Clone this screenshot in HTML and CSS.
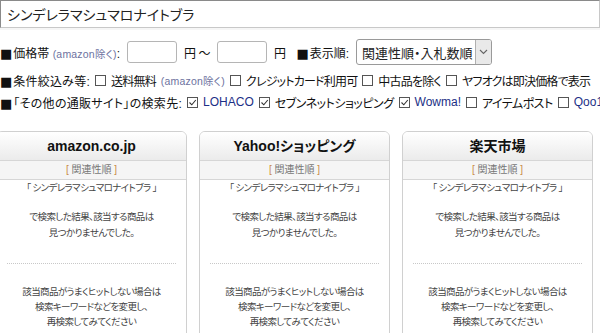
FILE: index.html
```html
<!DOCTYPE html>
<html lang="ja">
<head>
    <meta charset="UTF-8">
    <title>シンデレラマシュマロナイトブラ - 横断検索</title>
    <link rel="stylesheet" href="styles.css">
</head>
<body>

    <div class="searchbar">
        <input type="text" class="keyword" value="シンデレラマシュマロナイトブラ">
    </div>

    <div class="options">
        <div class="row">
            <span class="head"><span class="sq">■</span>価格帯 <small class="note">(amazon除く)</small>:</span>
            <input type="text" class="price">
            <span>円 ～</span>
            <input type="text" class="price">
            <span>円</span>
            <span class="head sort-label"><span class="sq">■</span>表示順:</span>
            <div class="select">
                <span class="select-text">関連性順・入札数順</span>
                <span class="select-arrow">
                    <svg width="9" height="6" viewBox="0 0 9 6"><path d="M1 1 L4.5 4.5 L8 1" fill="none" stroke="#666" stroke-width="1.1"/></svg>
                </span>
            </div>
        </div>

        <div class="row tight">
            <span class="head"><span class="sq">■</span>条件絞込み等:</span>
            <label><span class="box"></span>送料無料 <small class="note">(amazon除く)</small></label>
            <label><span class="box"></span>クレジットカード利用可</label>
            <label><span class="box"></span>中古品を除く</label>
            <label><span class="box"></span>ヤフオクは即決価格で表示</label>
        </div>

        <div class="row">
            <span class="head-sites"><span class="sq">■</span>「その他の通販サイト」の検索先:</span>
            <label><span class="box"><svg width="9" height="9" viewBox="0 0 9 9"><path d="M1.5 4.5 L3.8 6.8 L7.8 2" fill="none" stroke="#333" stroke-width="1.1"/></svg></span><span class="site">LOHACO</span></label>
            <label><span class="box"><svg width="9" height="9" viewBox="0 0 9 9"><path d="M1.5 4.5 L3.8 6.8 L7.8 2" fill="none" stroke="#333" stroke-width="1.1"/></svg></span>セブンネットショッピング</label>
            <label><span class="box"><svg width="9" height="9" viewBox="0 0 9 9"><path d="M1.5 4.5 L3.8 6.8 L7.8 2" fill="none" stroke="#333" stroke-width="1.1"/></svg></span><span class="site">Wowma!</span></label>
            <label><span class="box"></span>アイテムポスト</label>
            <label><span class="box"></span><span class="site">Qoo10</span></label>
        </div>
    </div>

    <div class="results">
        <div class="card">
            <div class="card-head">amazon.co.jp</div>
            <div class="card-sort"><span class="br">[</span> 関連性順 <span class="br">]</span></div>
            <div class="card-body">
                <p class="query">「 シンデレラマシュマロナイトブラ 」</p>
                <p class="result">で検索した結果、該当する商品は<br>見つかりませんでした。</p>
                <hr>
                <p class="hint">該当商品がうまくヒットしない場合は<br>検索キーワードなどを変更し、<br>再検索してみてください</p>
            </div>
        </div>

        <div class="card">
            <div class="card-head">Yahoo!ショッピング</div>
            <div class="card-sort"><span class="br">[</span> 関連性順 <span class="br">]</span></div>
            <div class="card-body">
                <p class="query">「 シンデレラマシュマロナイトブラ 」</p>
                <p class="result">で検索した結果、該当する商品は<br>見つかりませんでした。</p>
                <hr>
                <p class="hint">該当商品がうまくヒットしない場合は<br>検索キーワードなどを変更し、<br>再検索してみてください</p>
            </div>
        </div>

        <div class="card">
            <div class="card-head">楽天市場</div>
            <div class="card-sort"><span class="br">[</span> 関連性順 <span class="br">]</span></div>
            <div class="card-body">
                <p class="query">「 シンデレラマシュマロナイトブラ 」</p>
                <p class="result">で検索した結果、該当する商品は<br>見つかりませんでした。</p>
                <hr>
                <p class="hint">該当商品がうまくヒットしない場合は<br>検索キーワードなどを変更し、<br>再検索してみてください</p>
            </div>
        </div>
    </div>

</body>
</html>
```

FILE: styles.css
```css
* {
    margin: 0;
    padding: 0;
    box-sizing: border-box;
    font-family: "Liberation Sans", "Noto Sans CJK JP", sans-serif;
    font-feature-settings: "palt";
}

body, html {
    width: 100%;
    height: 100%;
    overflow: hidden;
    background: #fff;
    color: #111;
}

.searchbar {
    background: #f6f6f6;
    padding-bottom: 2px;
}

.keyword {
    display: block;
    width: 100%;
    height: 28px;
    padding: 0 6px;
    font-size: 14px;
    color: #222;
    border: 1px solid #c8c8c8;
    border-top-color: #8a8a8a;
    border-left-color: #8a8a8a;
    background: #fff;
    outline: none;
}

.options {
    padding-top: 8px;
    font-size: 12px;
    font-family: "Noto Sans CJK JP", sans-serif;
    letter-spacing: -0.5px;
}

.head {
    letter-spacing: 0.2px;
    font-feature-settings: normal;
}

.head-sites {
    letter-spacing: 0.3px;
}

.sq {
    font-family: "DejaVu Sans", sans-serif;
    font-size: 13px;
    letter-spacing: 0;
    margin-right: 1px;
}

.row {
    display: flex;
    align-items: center;
    white-space: nowrap;
    height: 22px;
    gap: 5px;
}

.row:first-child {
    height: 28px;
    margin-bottom: 3px;
}

.row:first-child .head {
    letter-spacing: 0;
}

.tight label {
    letter-spacing: -0.8px;
}

.note {
    font-family: "Liberation Sans", "Noto Sans CJK JP", sans-serif;
    font-size: 10.5px;
    letter-spacing: 0.2px;
    color: #6d72a0;
}

.price {
    width: 50px;
    height: 22px;
    border: 1px solid #b5b5b5;
    border-radius: 3px;
    margin: 0 2px;
    outline: none;
}

.sort-label {
    margin-left: 6px;
}

.select {
    display: flex;
    align-items: stretch;
    width: 136px;
    height: 26px;
    border: 1px solid #9a9a9a;
    border-radius: 3px;
    overflow: hidden;
    margin-left: 2px;
}

.select-text {
    flex: 1;
    display: flex;
    align-items: center;
    padding-left: 5px;
    font-size: 13px;
    letter-spacing: 0;
    color: #222;
}

.select-arrow {
    width: 16px;
    display: flex;
    align-items: center;
    justify-content: center;
    background: #e9e9e9;
    border-left: 1px solid #b0b0b0;
}

.row label {
    display: flex;
    align-items: center;
    gap: 5px;
}

.box {
    display: inline-flex;
    align-items: center;
    justify-content: center;
    width: 11px;
    height: 11px;
    border: 1px solid #555;
    background: #fff;
}

.site {
    font-family: "Liberation Sans", sans-serif;
    letter-spacing: 0;
    color: #1c2f86;
}

.results {
    display: flex;
    gap: 12px;
    margin-left: -4px;
    margin-top: 18px;
}

.card {
    flex: 0 0 191px;
    border: 1px solid #d0d0d0;
    border-radius: 6px 6px 0 0;
    overflow: hidden;
}

.card-head {
    height: 29px;
    line-height: 29px;
    text-align: center;
    font-size: 14px;
    font-weight: bold;
    color: #111;
    background: linear-gradient(#ffffff, #ebebeb);
    border-bottom: 1px solid #d6d6d6;
}

.card-sort {
    height: 19px;
    line-height: 18px;
    text-align: center;
    font-size: 10px;
    color: #777;
    background: #f5f5f5;
    border-bottom: 1px solid #d6d6d6;
}

.card-sort .br {
    color: #c88b48;
}

.card-body {
    text-align: center;
    font-size: 9.5px;
    letter-spacing: -0.6px;
    color: #444;
    padding: 0 6px 20px;
    white-space: nowrap;
}

.query {
    margin-top: 0;
    line-height: 16px;
}

.result {
    margin-top: 13px;
    line-height: 16px;
}

hr {
    border: none;
    border-top: 1px dotted #c8c8c8;
    margin: 22px 4px 0;
}

.hint {
    margin-top: 20px;
    line-height: 15px;
}
```
